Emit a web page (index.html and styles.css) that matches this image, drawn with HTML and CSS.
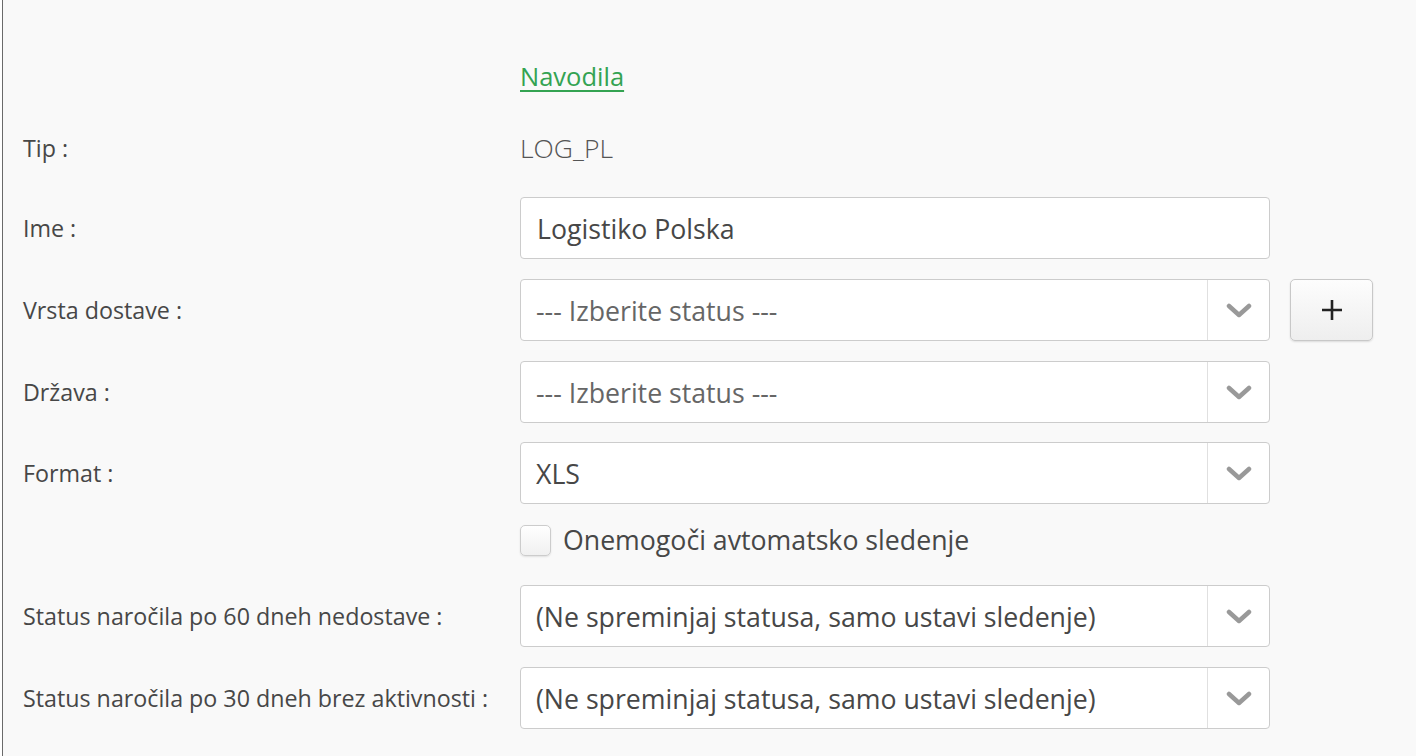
FILE: index.html
```html
<!DOCTYPE html>
<html>
<head>
<meta charset="utf-8">
<link rel="stylesheet" href="styles.css">
</head>
<body>
<div class="frame">
  <div class="row r-nav">
    <div class="label"></div>
    <div class="field"><a class="link" href="#">Navodila</a></div>
  </div>
  <div class="row r-tip">
    <div class="label">Tip :</div>
    <div class="field"><span class="static">LOG_PL</span></div>
  </div>
  <div class="row r-ime">
    <div class="label">Ime :</div>
    <div class="field"><div class="input">Logistiko Polska</div></div>
  </div>
  <div class="row r-gap">
    <div class="label">Vrsta dostave :</div>
    <div class="field">
      <div class="select placeholder"><span class="sel-text">--- Izberite status ---</span><span class="arrow"><svg width="26" height="16" viewBox="0 0 26 16"><path d="M3 3 L13 12 L23 3" fill="none" stroke="#999" stroke-width="4.5" stroke-linecap="round" stroke-linejoin="round"/></svg></span></div>
    </div>
    <button class="plus"><svg width="22" height="22" viewBox="0 0 22 22"><path d="M11 1 V21 M1 11 H21" stroke="#222" stroke-width="2.6"/></svg></button>
  </div>
  <div class="row r-gap">
    <div class="label">Država :</div>
    <div class="field">
      <div class="select placeholder"><span class="sel-text">--- Izberite status ---</span><span class="arrow"><svg width="26" height="16" viewBox="0 0 26 16"><path d="M3 3 L13 12 L23 3" fill="none" stroke="#999" stroke-width="4.5" stroke-linecap="round" stroke-linejoin="round"/></svg></span></div>
    </div>
  </div>
  <div class="row r-gap2">
    <div class="label">Format :</div>
    <div class="field">
      <div class="select"><span class="sel-text">XLS</span><span class="arrow"><svg width="26" height="16" viewBox="0 0 26 16"><path d="M3 3 L13 12 L23 3" fill="none" stroke="#999" stroke-width="4.5" stroke-linecap="round" stroke-linejoin="round"/></svg></span></div>
    </div>
  </div>
  <div class="row r-check">
    <div class="label"></div>
    <div class="field check-field"><span class="checkbox"></span><span class="check-label">Onemogoči avtomatsko sledenje</span></div>
  </div>
  <div class="row r-after-check">
    <div class="label">Status naročila po 60 dneh nedostave :</div>
    <div class="field">
      <div class="select"><span class="sel-text">(Ne spreminjaj statusa, samo ustavi sledenje)</span><span class="arrow"><svg width="26" height="16" viewBox="0 0 26 16"><path d="M3 3 L13 12 L23 3" fill="none" stroke="#999" stroke-width="4.5" stroke-linecap="round" stroke-linejoin="round"/></svg></span></div>
    </div>
  </div>
  <div class="row r-gap">
    <div class="label">Status naročila po 30 dneh brez aktivnosti :</div>
    <div class="field">
      <div class="select"><span class="sel-text">(Ne spreminjaj statusa, samo ustavi sledenje)</span><span class="arrow"><svg width="26" height="16" viewBox="0 0 26 16"><path d="M3 3 L13 12 L23 3" fill="none" stroke="#999" stroke-width="4.5" stroke-linecap="round" stroke-linejoin="round"/></svg></span></div>
    </div>
  </div>
</div>
</body>
</html>
```
FILE: styles.css
```css
html, body {
  margin: 0;
  padding: 0;
  background: #fff;
  height: 100%;
  overflow: hidden;
}
body {
  font-family: "Open Sans", "Liberation Sans", sans-serif;
  color: #444;
}
.frame {
  margin-left: 2px;
  border-left: 1px solid #6a6a6a;
  background: #f9f9f9;
  min-height: 100%;
  padding: 45px 0 0 20px;
  box-sizing: border-box;
}
.row {
  display: flex;
  align-items: center;
  min-height: 62px;
}
.label {
  width: 497px;
  flex: none;
  font-size: 23.25px;
  line-height: 30px;
  color: #474747;
}
.field {
  width: 750px;
  flex: none;
}
.r-tip { margin-top: 10px; }
.r-ime { margin-top: 18px; }
.r-gap { margin-top: 20px; }
.r-gap2 { margin-top: 19px; }
.r-check { margin-top: 20px; min-height: 32px; height: 32px; }
.r-after-check { margin-top: 29px; }
.link {
  font-size: 25.5px;
  color: #34a352;
  text-decoration: underline;
  text-underline-offset: 4px;
  text-decoration-thickness: 2px;
}
.static {
  font-size: 26.5px;
  color: #555;
  font-weight: 300;
}
.input, .select {
  height: 62px;
  box-sizing: border-box;
  border: 1px solid #ccc;
  border-radius: 4px;
  background: #fff;
  font-size: 26.7px;
  color: #474747;
  display: flex;
  align-items: center;
}
.input { padding-left: 16px; }
.select { padding-left: 15px; }
.sel-text { flex: 1; }
.placeholder .sel-text { color: #666; }
.arrow {
  width: 62px;
  height: 60px;
  border-left: 1px solid #e0e0e0;
  display: flex;
  align-items: center;
  justify-content: center;
  padding-top: 2px;
  box-sizing: border-box;
}
.plus {
  margin-left: 20px;
  width: 83px;
  height: 62px;
  border: 1px solid #c8c8c8;
  border-radius: 5px;
  background: linear-gradient(#fdfdfd, #eeeeee);
  box-shadow: 0 1px 2px rgba(0,0,0,0.12);
  display: flex;
  align-items: center;
  justify-content: center;
  padding: 0;
}
.check-field {
  display: flex;
  align-items: center;
}
.checkbox {
  width: 31px;
  height: 31px;
  box-sizing: border-box;
  border: 1px solid #ccc;
  border-radius: 5px;
  background: linear-gradient(#fff, #f0f0f0);
  box-shadow: 0 1px 2px rgba(0,0,0,0.1);
  margin-right: 12px;
}
.check-label {
  font-size: 26.7px;
  line-height: 32px;
  color: #474747;
}
```
